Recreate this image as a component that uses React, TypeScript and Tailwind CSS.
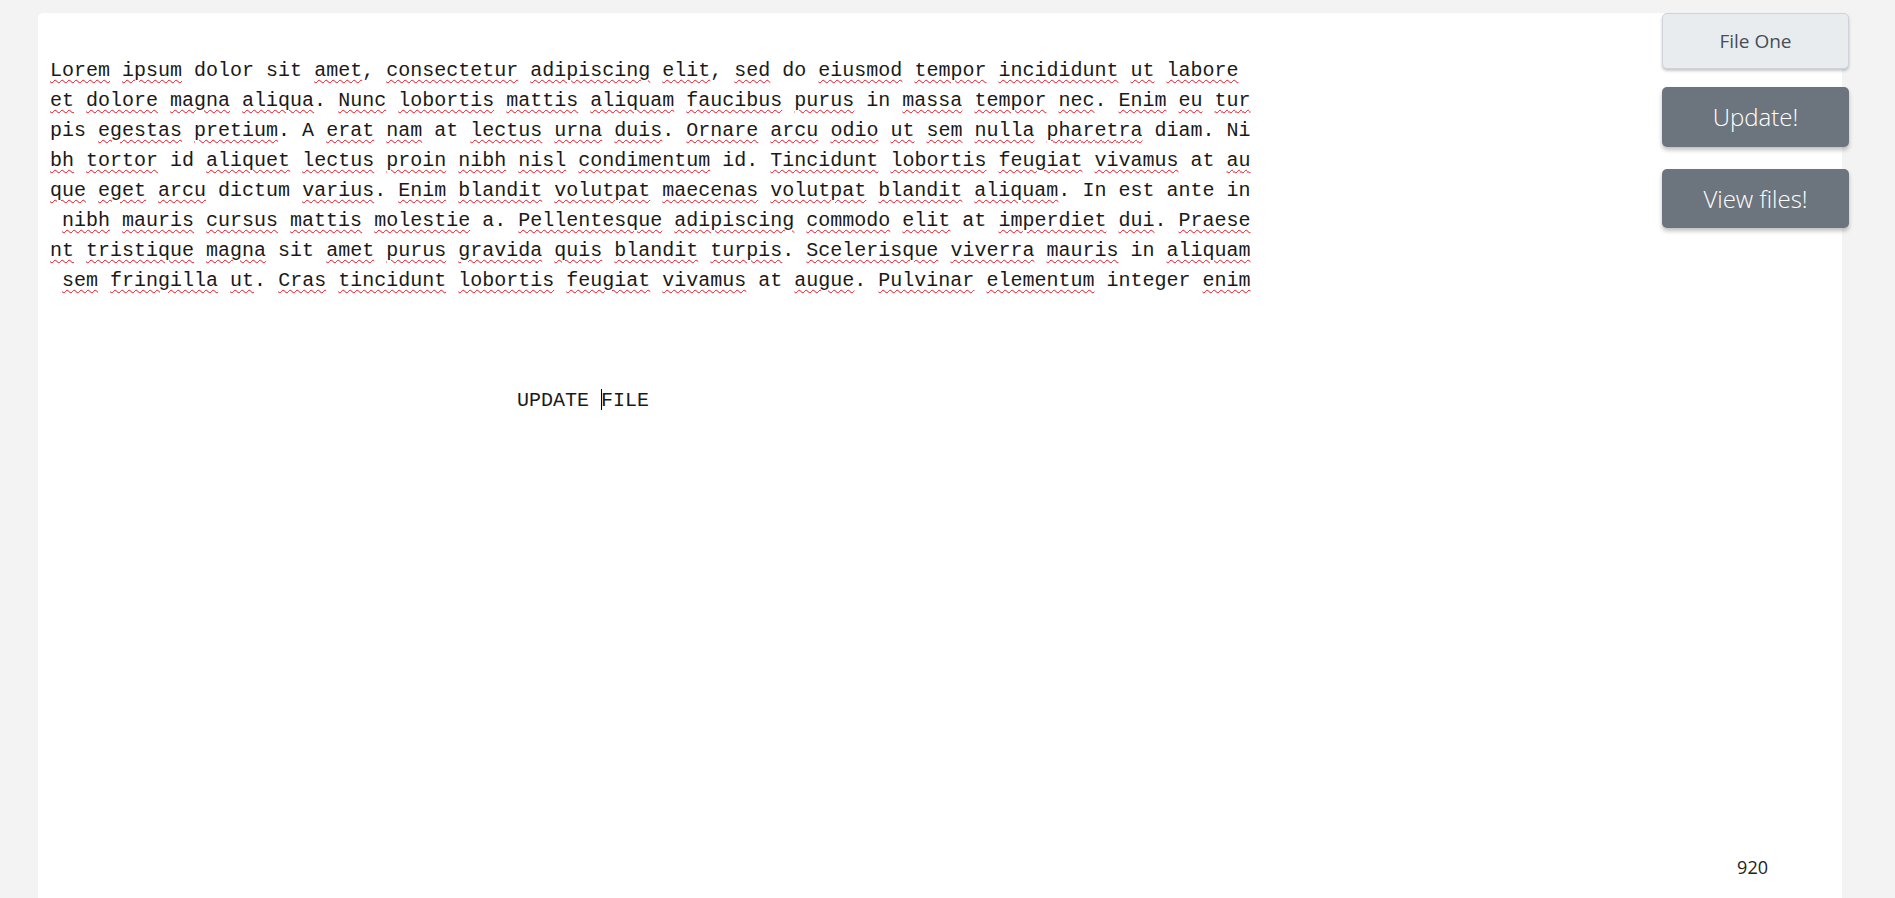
import React from "react";

const lines = [
    "Lorem ipsum dolor sit amet, consectetur adipiscing elit, sed do eiusmod tempor incididunt ut labore ",
    "et dolore magna aliqua. Nunc lobortis mattis aliquam faucibus purus in massa tempor nec. Enim eu tur",
    "pis egestas pretium. A erat nam at lectus urna duis. Ornare arcu odio ut sem nulla pharetra diam. Ni",
    "bh tortor id aliquet lectus proin nibh nisl condimentum id. Tincidunt lobortis feugiat vivamus at au",
    "que eget arcu dictum varius. Enim blandit volutpat maecenas volutpat blandit aliquam. In est ante in",
    " nibh mauris cursus mattis molestie a. Pellentesque adipiscing commodo elit at imperdiet dui. Praese",
    "nt tristique magna sit amet purus gravida quis blandit turpis. Scelerisque viverra mauris in aliquam",
    " sem fringilla ut. Cras tincidunt lobortis feugiat vivamus at augue. Pulvinar elementum integer enim",
];

// words the spell checker leaves alone
const known = new Set([
    "dolor", "sit", "do", "in", "pis", "A", "a", "at", "diam", "Ni",
    "id", "dictum", "In", "est", "ante", "integer",
]);

function Line({ text }: { text: string }) {
    const parts = text.split(/([A-Za-z]+)/);
    return (
        <div className="whitespace-pre h-[30px]">
            {parts.map((p, i) =>
                /^[A-Za-z]+$/.test(p) && !known.has(p) ? (
                    <span
                        key={i}
                        className="underline decoration-wavy decoration-[#e81123] decoration-1 underline-offset-[3px]"
                    >
                        {p}
                    </span>
                ) : (
                    <span key={i}>{p}</span>
                )
            )}
        </div>
    );
}

export default function App() {
    return (
        <div className="relative min-h-screen bg-[#f3f3f3] pt-[13px] pl-[38px] overflow-hidden">
            <div className="w-[1804px] h-[885px] bg-white rounded-tl-[5px] flex flex-col pt-[43px] pl-[12px] pr-[74px] pb-[18px]">
                <div className="font-['Liberation_Mono',monospace] text-[20px] leading-[30px] text-[#1a1a1a]">
                    {lines.map((l, i) => (
                        <Line key={i} text={l} />
                    ))}
                </div>

                <div className="mt-[90px] ml-[467px] font-['Liberation_Mono',monospace] text-[20px] leading-[30px] text-[#1a1a1a] whitespace-pre">
                    UPDATE <span className="inline-block w-px h-[21px] bg-black align-[-4px] -mr-px"></span>FILE
                </div>

                <div className="mt-auto self-end font-['Open_Sans',sans-serif] text-[18px] leading-[25px] text-[#222]">
                    920
                </div>
            </div>

            {/* floating actions */}
            <div className="absolute top-[13px] left-[1662px] w-[187px] flex flex-col font-['Open_Sans',sans-serif]">
                <button className="h-[56px] rounded-[5px] border border-[#cfd3d8] bg-[#e9ecef] text-[19px] text-[#454d55] shadow-[0_2px_3px_rgba(0,0,0,0.22)]">
                    File One
                </button>
                <button className="mt-[18px] h-[60px] rounded-[5px] bg-[#6c757d] text-[24px] font-light text-white shadow-[0_3px_4px_rgba(0,0,0,0.25)]">
                    Update!
                </button>
                <button className="mt-[22px] h-[59px] rounded-[5px] bg-[#6c757d] text-[24px] font-light text-white shadow-[0_3px_4px_rgba(0,0,0,0.25)]">
                    View files!
                </button>
            </div>
        </div>
    );
}
